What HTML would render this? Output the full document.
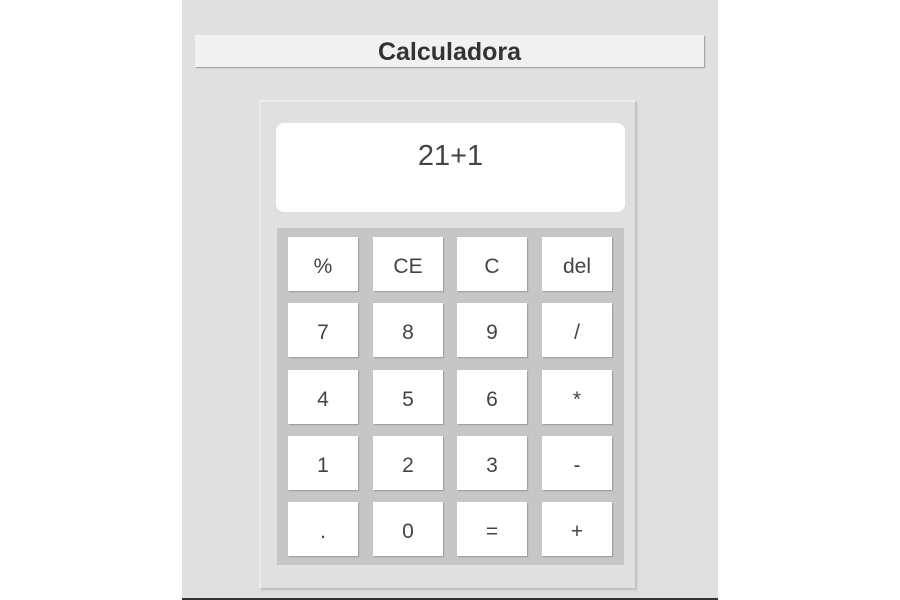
<!DOCTYPE html>
<html><head><style>
body{margin:0;width:900px;height:600px;background:#fff;position:relative;overflow:hidden;font-family:"Liberation Sans",sans-serif}
.panel{position:absolute;left:182px;top:0;width:536px;height:598px;background:#e0e0e0;border-bottom:2px solid #333}
.title{position:absolute;left:195px;top:35px;width:509px;height:32px;background:#f1f1f1;box-shadow:1px 1px 1px #999;text-align:center;font-size:25px;font-weight:bold;color:#333;line-height:34px}
.calc{position:absolute;left:259px;top:100px;width:374px;height:486px;background:#e0e0e0;border:2px solid #ececec;border-right:none;border-bottom:none;box-shadow:2px 2px 2px #bbb}
.disp{position:absolute;left:276px;top:123px;width:349px;height:89px;background:#fff;border-radius:8px;text-align:center;font-size:29px;color:#444;line-height:66px}
.pad{position:absolute;left:277px;top:228px;width:347px;height:337px;background:#c6c6c6}
.b{position:absolute;width:70px;height:54px;background:#fff;box-shadow:1px 1px 1px #999;text-align:center;line-height:59px;font-size:21px;color:#444}
</style></head><body>
<div class="panel"></div>
<div class="title">Calculadora</div>
<div class="calc"></div>
<div class="disp">21+1</div>
<div class="pad"></div>
<div class="b" style="left:288px;top:237px">%</div>
<div class="b" style="left:373px;top:237px">CE</div>
<div class="b" style="left:457px;top:237px">C</div>
<div class="b" style="left:542px;top:237px">del</div>
<div class="b" style="left:288px;top:303px">7</div>
<div class="b" style="left:373px;top:303px">8</div>
<div class="b" style="left:457px;top:303px">9</div>
<div class="b" style="left:542px;top:303px">/</div>
<div class="b" style="left:288px;top:370px">4</div>
<div class="b" style="left:373px;top:370px">5</div>
<div class="b" style="left:457px;top:370px">6</div>
<div class="b" style="left:542px;top:370px">*</div>
<div class="b" style="left:288px;top:436px">1</div>
<div class="b" style="left:373px;top:436px">2</div>
<div class="b" style="left:457px;top:436px">3</div>
<div class="b" style="left:542px;top:436px">-</div>
<div class="b" style="left:288px;top:502px">.</div>
<div class="b" style="left:373px;top:502px">0</div>
<div class="b" style="left:457px;top:502px">=</div>
<div class="b" style="left:542px;top:502px">+</div>
</body></html>
